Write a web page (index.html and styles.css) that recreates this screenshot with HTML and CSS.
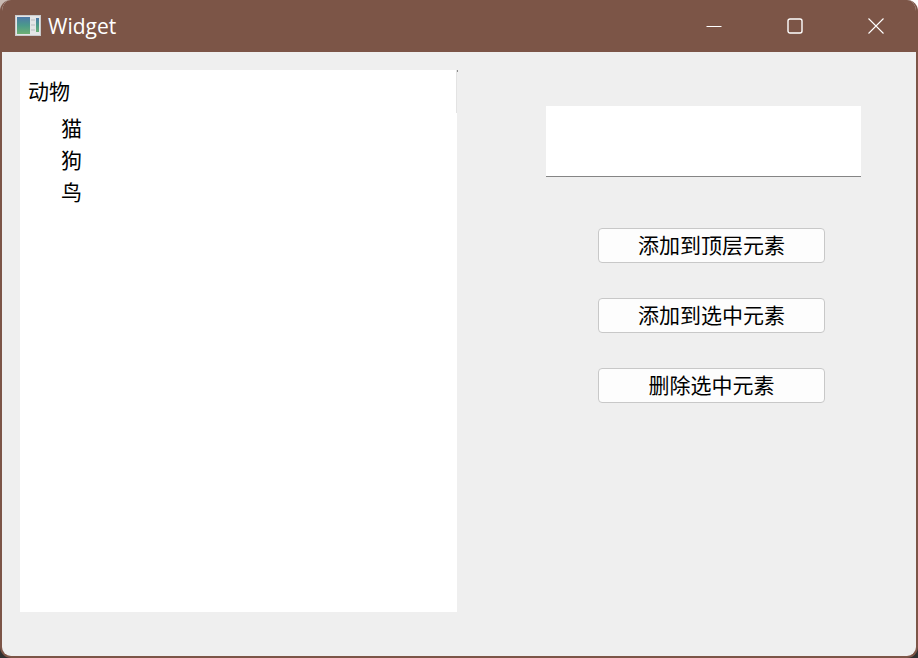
FILE: index.html
```html
<!DOCTYPE html>
<html lang="en">
<head>
    <meta charset="UTF-8">
    <title>Widget</title>
    <link rel="stylesheet" href="styles.css">
</head>
<body>
    <div class="window">
        <div class="titlebar">
            <svg class="app-icon" width="26" height="21" viewBox="0 0 26 21">
                <defs>
                    <linearGradient id="pane" x1="0" y1="0" x2="0" y2="1">
                        <stop offset="0" stop-color="#4d78a8"/>
                        <stop offset="0.5" stop-color="#4b9a8a"/>
                        <stop offset="1" stop-color="#6db074"/>
                    </linearGradient>
                </defs>
                <rect x="0" y="0" width="26" height="21" fill="#c9cacc"/>
                <rect x="1" y="1" width="24" height="19" fill="#e4e5e6"/>
                <rect x="2" y="2" width="13" height="17" fill="url(#pane)"/>
                <rect x="21" y="3" width="3" height="14" fill="url(#pane)"/>
                <rect x="16" y="4" width="4" height="2" fill="#cfd1d3"/>
                <rect x="16" y="9" width="4" height="2" fill="#cfd1d3"/>
                <rect x="16" y="14" width="4" height="2" fill="#cfd1d3"/>
            </svg>
            <span class="title">Widget</span>
            <div class="controls">
                <button class="ctl">
                    <svg width="16" height="16" viewBox="0 0 16 16"><path d="M0.5 8.5H15.5" stroke="#fff" fill="none"/></svg>
                </button>
                <button class="ctl">
                    <svg width="16" height="16" viewBox="0 0 16 16"><rect x="1" y="1" width="14" height="14" rx="2" stroke="#fff" stroke-width="1.4" fill="none"/></svg>
                </button>
                <button class="ctl">
                    <svg width="16" height="16" viewBox="0 0 16 16"><path d="M0.5 0.5L15.5 15.5M15.5 0.5L0.5 15.5" stroke="#fff" stroke-width="1.1" fill="none"/></svg>
                </button>
            </div>
        </div>
        <div class="content">
            <div class="tree">
                <div class="tree-edge"></div>
                <div class="tree-top">动物</div>
                <div class="tree-item">猫</div>
                <div class="tree-item">狗</div>
                <div class="tree-item">鸟</div>
            </div>
            <div class="side">
                <input class="line-edit" type="text">
                <div class="buttons">
                    <button class="push">添加到顶层元素</button>
                    <button class="push">添加到选中元素</button>
                    <button class="push">删除选中元素</button>
                </div>
            </div>
        </div>
    </div>
</body>
</html>
```

FILE: styles.css
```css
*, *:before, *:after {
    box-sizing: border-box;
}
html, body {
    margin: 0;
    height: 100%;
}
body {
    background: linear-gradient(90deg, #c9bab2 50%, #fff 50%) top / 100% 20px no-repeat, #2f2f2f;
}
.window {
    width: 918px;
    height: 658px;
    display: flex;
    flex-direction: column;
    background: #efefef;
    border: 2px solid #7c5547;
    border-top: none;
    border-radius: 11px;
    overflow: hidden;
    font-family: "Noto Sans CJK SC", sans-serif;
    font-size: 21px;
    color: #000;
}
.titlebar {
    height: 52px;
    flex: none;
    display: flex;
    align-items: center;
    background: #7c5547;
    color: white;
    padding-left: 13px;
}
.app-icon {
    margin: 0 7px 1px 0;
}
.title {
    font-family: "Open Sans", sans-serif;
    font-size: 21px;
}
.controls {
    margin-left: auto;
    display: flex;
}
.ctl {
    width: 81px;
    height: 52px;
    padding: 0;
    border: none;
    background: none;
    display: flex;
    align-items: center;
    justify-content: center;
}
.content {
    flex: 1;
    display: flex;
    padding: 18px 0 0 18px;
}
.tree {
    position: relative;
    width: 437px;
    height: 542px;
    background: white;
    line-height: 32px;
    padding-top: 4px;
}
/* leftover edge of the hidden header */
.tree-edge {
    position: absolute;
    top: 0;
    right: 0;
    width: 1px;
    height: 43px;
    background: #e3e3e3;
}
.tree-edge:after {
    content: "";
    position: absolute;
    top: 0;
    left: 1px;
    width: 1px;
    height: 2px;
    background: #8c8c8c;
}
.tree-top {
    padding-left: 8px;
    margin-bottom: 5px;
}
.tree-item {
    padding-left: 41px;
}
.side {
    padding: 36px 0 0 89px;
}
.line-edit {
    display: block;
    width: 315px;
    height: 71px;
    background: white;
    border: none;
    border-bottom: 1px solid #858585;
    outline: none;
}
.buttons {
    display: flex;
    flex-direction: column;
    gap: 35px;
    margin: 51px 0 0 52px;
}
.push {
    width: 227px;
    height: 35px;
    padding: 0 0 2px;
    background: #fdfdfd;
    border: 1px solid #c8c8c8;
    border-radius: 4px;
    font: inherit;
    line-height: 31px;
    color: #000;
}
```
